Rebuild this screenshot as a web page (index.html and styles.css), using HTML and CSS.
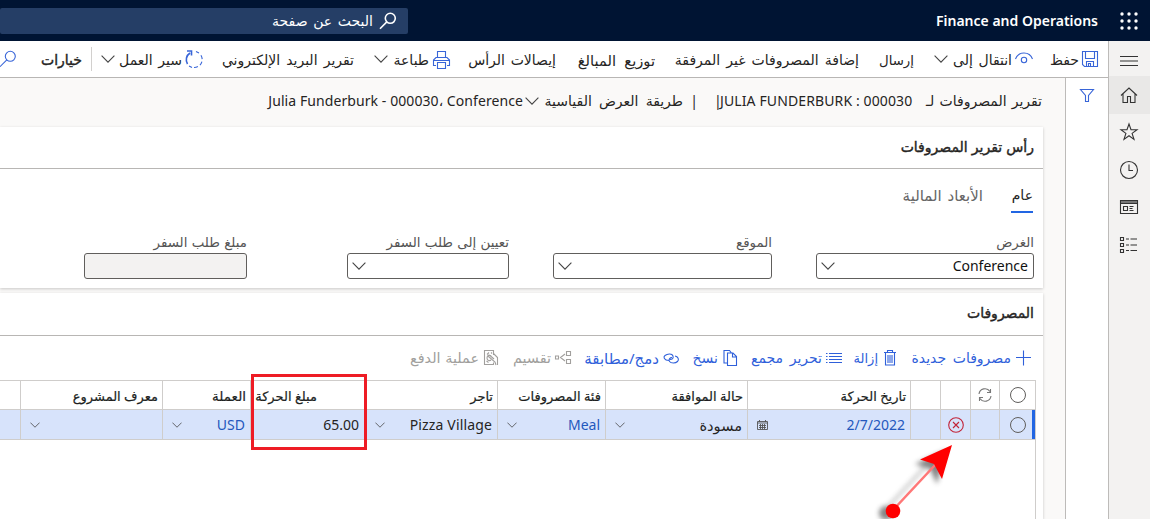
FILE: index.html
```
<!DOCTYPE html>
<html lang="ar" dir="rtl">
<head>
<meta charset="utf-8">
<title>Finance and Operations</title>
<link rel="stylesheet" href="styles.css">
</head>
<body>
<svg class="defs" aria-hidden="true">
  <symbol id="chev" viewBox="0 0 14 8"><path d="M.6.7 7 7.1 13.4.7"/></symbol>
  <symbol id="glass" viewBox="0 0 18 18"><circle cx="11.3" cy="6.3" r="5"/><path d="M7.8 9.9 1 16.7"/></symbol>
</svg>
<header class="top">
  <svg class="waffle" viewBox="0 0 18 18"><g fill="#fff"><circle cx="2" cy="2" r="1.7"/><circle cx="9" cy="2" r="1.7"/><circle cx="16" cy="2" r="1.7"/><circle cx="2" cy="9" r="1.7"/><circle cx="9" cy="9" r="1.7"/><circle cx="16" cy="9" r="1.7"/><circle cx="2" cy="16" r="1.7"/><circle cx="9" cy="16" r="1.7"/><circle cx="16" cy="16" r="1.7"/></g></svg>
  <span class="brand" dir="ltr">Finance and Operations</span>
  <div class="search"><svg class="glass"><use href="#glass"/></svg><span class="t w-search">البحث عن صفحة</span></div>
</header>
<div class="shell">
  <nav class="rail">
    <span class="rail-item"><svg viewBox="0 0 20 20"><path d="M1 5.500h18M1 10h18M1 14.500h18"/></svg></span>
    <span class="rail-item on"><svg viewBox="0 0 20 20"><path d="M2 10.500 10 3l8 7.500M4 9v8.500h4.500v-6h3v6H16V9"/></svg></span>
    <span class="rail-item"><svg viewBox="0 0 20 20"><path d="m10 2 2 5.800h6l-4.900 3.600 1.900 6L10 13.800l-5 3.600 1.900-6L2 7.800h6z"/></svg></span>
    <span class="rail-item"><svg viewBox="0 0 20 20"><circle cx="10" cy="10" r="8.500"/><path d="M10 4.500v6h4"/></svg></span>
    <span class="rail-item"><svg viewBox="0 0 20 20"><path d="M1.500 3.500h17v13h-17zM1.500 6.500h17M4.500 9.500h4v4h-4zM10.500 9.500h4M10.500 11.500h3M10.500 13.500h4"/><path stroke="#777" stroke-width="2" d="M2 5h16"/></svg></span>
    <span class="rail-item"><svg viewBox="0 0 20 20"><path d="M1.500 2.500h3v3h-3zM1.500 8.500h3v3h-3zM1.500 14.500h3v3h-3zM7 4h3M11.500 4H18M7 10h3M11.500 10H18M7 15.500h3M11.500 15.500H18"/></svg></span>
  </nav>
  <div class="app">
    <div class="commands">
      <span class="cmd c-save"><svg class="i16 blue" viewBox="0 0 16 16"><path d="M.5.500h15v15h-13l-2-2zM3.500.500v7h9v-7M4.500 15.500v-5h7v5M6.500 15.500v-3h2v3"/></svg><span class="t w-save">حفظ</span></span>
      <span class="cmd c-goto"><svg class="i18 blue" viewBox="0 0 18 18"><circle cx="9" cy="10" r="2.700"/><path d="M.5 9C2 5 5 3 9 3s7 2 8.500 6"/></svg><span class="t w-goto">انتقال إلى</span><svg class="chev"><use href="#chev"/></svg></span>
      <span class="cmd c-send"><span class="t w-send">إرسال</span></span>
      <span class="cmd c-add"><span class="t w-add">إضافة المصروفات غير المرفقة</span></span>
      <span class="cmd c-dist"><span class="t w-dist">توزيع المبالغ</span></span>
      <span class="cmd c-rcpt"><span class="t w-rcpt">إيصالات الرأس</span></span>
      <span class="cmd c-print"><svg class="i19 blue" viewBox="0 0 19 19"><path d="M5.500 7.500v-6h8v6M4 15.500H1.500V10L4 7.500h11l2.500 2.500v5.500H15M1.500 10.500h16M5.500 12.500h8v6h-8z"/></svg><span class="t w-print">طباعة</span><svg class="chev"><use href="#chev"/></svg></span>
      <span class="cmd c-mail"><span class="t w-mail">تقرير البريد الإلكتروني</span></span>
      <span class="cmd c-flow"><svg class="i19 blue" viewBox="0 0 19 19"><path d="M2.500 14A8 8 0 0 1 5 3M2 1h4.500v4.500" stroke-width="1.600"/><path d="M9 17.500A8 8 0 0 0 15 4" stroke-dasharray="4 2.500"/><path d="M4 16l3 1.400M11 1.500l3 1.500"/></svg><span class="t w-flow">سير العمل</span><svg class="chev"><use href="#chev"/></svg></span>
      <span class="cmd c-opt"><span class="t w-opt">خيارات</span></span>
      <svg class="i18 blue c-find"><use href="#glass"/></svg>
    </div>
    <div class="workspace">
      <aside class="filter"><svg viewBox="0 0 16 16"><path d="M1.500 1.500h13L9.500 7.500v6h-3v-6z"/></svg></aside>
      <main class="page">
        <div class="title">
          <span class="t w-t1">تقرير المصروفات لـ</span>
          <span class="w-t2" dir="ltr"><span class="tick">|</span>JULIA FUNDERBURK : 000030</span>
          <span class="w-bar">|</span>
          <span class="t w-t3">طريقة العرض القياسية</span>
          <svg class="chev"><use href="#chev"/></svg>
          <span class="w-t4" dir="ltr">Julia Funderburk - 000030<bdo dir="ltr">،</bdo> Conference</span>
        </div>
        <section class="card head-card">
          <h2><span class="t w-h1">رأس تقرير المصروفات</span></h2>
          <div class="tabs"><span class="tab active"><span class="t w-tab1">عام</span></span><span class="tab"><span class="t w-tab2">الأبعاد المالية</span></span></div>
          <div class="fields">
            <label class="field"><span class="t">الغرض</span><span class="box"><span dir="ltr" class="w-conf">Conference</span><svg class="chev"><use href="#chev"/></svg></span></label>
            <label class="field"><span class="t">الموقع</span><span class="box"><svg class="chev"><use href="#chev"/></svg></span></label>
            <label class="field"><span class="t">تعيين إلى طلب السفر</span><span class="box"><svg class="chev"><use href="#chev"/></svg></span></label>
            <label class="field apart"><span class="t">مبلغ طلب السفر</span><span class="box off"></span></label>
          </div>
        </section>
        <section class="card lines-card">
          <h2><span class="t w-h2">المصروفات</span></h2>
          <div class="actions">
            <span class="act a-new"><svg viewBox="0 0 16 16"><path d="M8.500 .5v15M1 7.500h15"/></svg><span class="t w-a1">مصروفات جديدة</span></span>
            <span class="act a-del"><svg viewBox="0 0 14 16"><path d="M1 2.500h12M4.500 2.500V.500h5v2M2.500 2.500v12.500h9V2.500M5 5V13M7 5V13M9 5V13"/></svg><span class="t w-a2">إزالة</span></span>
            <span class="act a-edit"><svg viewBox="0 0 16 16"><path d="M3 3.500h13M3 6.500h13M3 9.500h13M3 12.500h13M0 3.500h1.500M0 6.500h1.500M0 9.500h1.500M0 12.500h1.500"/></svg><span class="t w-a3">تحرير مجمع</span></span>
            <span class="act a-copy"><svg viewBox="0 0 14 16"><path d="M4.500 13H1V.500h5.500L8.500 3M4.500 3H10l3.500 3.500v9h-9zM9.500 3v4h4"/></svg><span class="t w-a4">نسخ</span></span>
            <span class="act a-merge"><svg viewBox="0 0 16 16"><path d="M6 10.500C1 10.500 0 7 2 5.500S9 3 10 6s-2 4-4 3M9 7.500c-2 0-4 2-2.500 4s6 2 8 0 .5-5-2.500-5.500"/></svg><span class="t w-a5">دمج/مطابقة</span></span>
            <span class="act a-split dim"><svg viewBox="0 0 16 16"><path d="M11.500 1.500h4v4h-4zM11.500 9.500h4v4h-4zM.5 6h3v3h-3zM10 4 5.500 7.500 10 11"/></svg><span class="t w-a6">تقسيم</span></span>
            <span class="act a-pay dim"><svg viewBox="0 0 14 16"><path d="M4 14.500H.500V.500h9V5M9.500 3.500l4 4v7.500M3 4.500l2-2M7 2.500l1 1M2.500 11l2 1.500M12 15l-1-3-6.500-5.500c-1-1 .5-2 1.500-1l4 3.500M7.500 6.500C6 4.500 3 5 3 8s3 3 4 2M4 14.500h5.500v-2"/></svg><span class="t w-a7">عملية الدفع</span></span>
          </div>
          <div class="grid">
            <div class="row labels">
              <span class="cell mid"><i class="ring"></i></span>
              <span class="cell mid"><svg class="sync" viewBox="0 0 14 14"><path d="M1 6a6 6 0 0 1 11-2.500M12.500 1v3.500H9M13 8A6 6 0 0 1 2 10.500M1.500 13V9.500H5"/></svg></span>
              <span class="cell"></span><span class="cell"></span>
              <span class="cell"><span class="t w-c1">تاريخ الحركة</span></span>
              <span class="cell"><span class="t">حالة الموافقة</span></span>
              <span class="cell"><span class="t">فئة المصروفات</span></span>
              <span class="cell"><span class="t">تاجر</span></span>
              <span class="cell amount"><span class="t">مبلغ الحركة</span></span>
              <span class="cell"><span class="t w-c6">العملة</span></span>
              <span class="cell"><span class="t">معرف المشروع</span></span>
              <span class="cell"></span>
            </div>
            <div class="row picked">
              <span class="cell mid"><i class="ring"></i></span>
              <span class="cell"></span>
              <span class="cell mid"><svg class="error" viewBox="0 0 16 16"><circle cx="8" cy="8" r="7.300"/><path d="m5 5 6 6M11 5l-6 6"/></svg></span>
              <span class="cell"></span>
              <span class="cell val link"><span dir="ltr">2/7/2022</span><svg class="cal" viewBox="0 0 11 11"><path d="M.5 1.500h10v8H.500zM.5 3h10M2.500 0v2M8.500 0v2M2 5.500h7M2 7.500h7M3.500 4v5M5.500 4v5M7.500 4v5"/></svg></span>
              <span class="cell val"><span class="t w-draft">مسودة</span><svg class="chev"><use href="#chev"/></svg></span>
              <span class="cell val link"><span>Meal</span><svg class="chev"><use href="#chev"/></svg></span>
              <span class="cell val merchant"><span>Pizza Village</span><svg class="chev"><use href="#chev"/></svg></span>
              <span class="cell val sum"><span>65.00</span></span>
              <span class="cell val link"><span>USD</span><svg class="chev"><use href="#chev"/></svg></span>
              <span class="cell val project"><svg class="chev"><use href="#chev"/></svg></span>
              <span class="cell"></span>
            </div>
            <div class="empty"></div>
          </div>
        </section>
      </main>
    </div>
  </div>
</div>
<div class="highlight"></div>
<svg class="arrow" viewBox="0 0 90 80">
  <g class="arrow-shadow"><path d="m26 69 39-42" stroke="#777" stroke-width="2"/><circle cx="26" cy="73" r="7" fill="#333"/><path d="M86 10 55 24l15 5 7 15z" fill="#333"/></g>
  <path d="m33 70 43-46" stroke="#f77" stroke-width="2.500"/><circle cx="33" cy="71" r="7.300" fill="red"/><path d="M92 5 60 19.500 74 24l8 15z" fill="red"/>
</svg>
</body>
</html>
```
FILE: styles.css
```
* { box-sizing: border-box; }
html, body { margin: 0; width: 1150px; height: 519px; overflow: hidden; }
body { display: flex; flex-direction: column; background: #fff; color: #252423; font: 14px/20px "Noto Sans", "DejaVu Sans", sans-serif; position: relative; }
.defs { position: absolute; width: 0; height: 0; }
svg { display: block; flex: none; fill: none; stroke: currentColor; stroke-width: 1.1; overflow: visible; }
.t { display: block; flex: none; white-space: nowrap; font-size: 14px; word-spacing: 2px; }
.chev { width: 14px; height: 8px; color: #444; flex: none; }

.top { height: 41px; flex: none; display: flex; background: #001433; color: #fff; align-items: center; padding-right: 12px; }
.waffle { width: 18px; height: 18px; stroke: none; }
.brand { font: 600 14px/20px "Noto Sans", sans-serif; width: 161px; margin-right: 23px; white-space: nowrap; }
.search { width: 408px; height: 26px; margin-right: auto; display: flex; align-items: center; gap: 6px; background: #253e66; border-radius: 2px; padding-right: 11px; }
.search .glass { width: 18px; height: 18px; stroke-width: 1.6; }

.shell { flex: 1; display: flex; min-height: 0; }
.rail { width: 42px; flex: none; background: #f3f2f1; border-left: 1px solid #bdbbb9; }
.rail-item { height: 37.500px; display: flex; align-items: center; justify-content: center; padding-right: 2px; }
.rail-item:first-child { height: 35px; padding-top: 4px; }
.rail-item svg { width: 20px; height: 20px; color: #333; }
.rail-item.on { background: #e9e8e7; }
.app { flex: 1; min-width: 0; display: flex; flex-direction: column; }
.commands { height: 37px; flex: none; border-bottom: 1px solid #b8b6b4; display: flex; align-items: center; padding-right: 10px; }
.cmd { display: flex; align-items: center; flex: none; gap: 3px; height: 24px; }
.cmd .t { padding-top: 2px; }
.cmd .chev { margin-right: 2px; }
.blue { color: #3865d8; }
.i16 { width: 16px; height: 16px; } .i18 { width: 18px; height: 18px; } .i19 { width: 19px; height: 19px; }
.c-save { width: 65px; } .c-goto { width: 119px; } .c-send { width: 55px; } .c-add { width: 204px; }
.c-dist { width: 99px; } .c-rcpt { width: 105px; } .c-print { width: 97px; } .c-mail { width: 150px; }
.c-flow { width: 113px; border-left: 1px solid #d2d0ce; } .c-opt { width: 74px; padding-right: 9px; }
.w-goto { width: 59px; } .w-print { width: 36px; } .w-flow { width: 62px; }
.w-send { font-size: 13.300px; } .w-add { word-spacing: 2.500px; } .w-mail { word-spacing: 2.500px; }
.w-dist { font-size: 14.700px; word-spacing: 4.500px; }
.w-opt, .card h2 .t { -webkit-text-stroke: .4px currentColor; }

.workspace { flex: 1; display: flex; min-height: 0; }
.filter { width: 43px; flex: none; border-left: 1px solid #bdbbb9; display: flex; justify-content: center; padding-top: 10px; color: #3865d8; }
.filter svg { width: 16px; height: 16px; }
.page { flex: 1; min-width: 0; background: #faf9f8; display: flex; flex-direction: column; padding-right: 22px; gap: 5px; }
.title { height: 45px; margin-bottom: -1px; flex: none; display: flex; align-items: center; padding-right: 1px; white-space: nowrap; }
.w-t1 { width: 116px; word-spacing: 1.500px; }
.w-t2 { width: 196px; margin-right: 14px; display: flex; justify-content: flex-start; letter-spacing: .12px; }
.tick { width: 4px; margin-left: -2px; margin-right: 2px; }
.w-bar { width: 4px; margin: 0 18px 0 11px; } .w-t3 { width: 139px; word-spacing: 3.500px; }
.w-t4 { letter-spacing: .08px; }
.title .chev { margin: 0 5px 0 2px; }
.card { background: #fff; box-shadow: 0 1px 3px #0003; }
.card h2 { margin: 0; height: 42px; border-bottom: 1px solid #b8b6b4; display: flex; align-items: center; padding: 0 9px 1px 0; font-weight: 400; }
.w-h1 { word-spacing: .5px; }
.head-card { height: 161px; flex: none; }
.lines-card { flex: 1; display: flex; flex-direction: column; }
.card.lines-card h2 { height: 43px; flex: none; padding-bottom: 2px; }
.tabs { display: flex; gap: 28px; padding: 16px 10px 0 0; height: 45px; color: #666; }
.tab { height: 28px; } .tab.active { border-bottom: 2px solid #2266e3; color: #252423; width: 22px; }
.w-tab2 { font-size: 15px; }
.fields { display: grid; grid-template-columns: 218px 219px 162px 219px; column-gap: 44px; padding: 18px 9px 0 0; }
.field { display: flex; flex-direction: column; gap: 1px; color: #555; }
.field .t { font-size: 13.400px; word-spacing: .8px; }
.field.apart { margin-right: 56px; }
.box { height: 26px; border: 1px solid #605e5c; border-radius: 3px; background: #fff; display: flex; align-items: center; padding: 0 5px 1px 4px; color: #111; }
.box .chev { margin-right: auto; } .off { background: #f3f2f1; }

.actions { display: flex; align-items: center; height: 44px; padding-right: 12px; color: #2f60da; flex: none; }
.act { display: flex; align-items: center; gap: 4px; flex: none; } .act svg { width: 16px; height: 16px; }
.dim { color: #a19f9d; }
.a-new { width: 133px; } .a-del { width: 56px; } .a-edit { width: 104px; } .a-copy { width: 59px; } .a-merge { width: 108px; } .a-split { width: 72px; }
.w-a1, .w-a3 { word-spacing: 3px; } .w-a2 { font-size: 13px; } .w-a5 { font-size: 15px; } .w-a6, .w-a7 { font-size: 14.400px; }
.w-a7 { word-spacing: 1px; }
.grid { flex: 1; display: flex; flex-direction: column; width: 1036px; margin-right: 7px; border: solid #cfcdcb; border-width: 1px 1px 0 0; }
.row { display: grid; grid-template-columns: 36px 29px 30px 30px 163px 142px 108px 132px 115px 88px 142px 20px; height: 29px; flex: none; border-bottom: 1px solid #cfcdcb; }
.cell { border-left: 1px solid #cfcdcb; display: flex; align-items: center; padding-right: 4px; min-width: 0; }
.cell:last-child { border-left: 0; }
.mid { justify-content: center; padding: 0; }
.labels { color: #201f1e; }
.labels .t { font-size: 13px; word-spacing: 0; padding-top: 1px; -webkit-text-stroke: .2px currentColor; }
.labels .w-c6 { font-size: 13.500px; }
.cell.amount { padding-right: 48px; }
.picked { height: 30px; background: #d7e3fb; box-shadow: inset -3px 0 #2266e3; }
.ring { width: 16px; height: 16px; border: 1px solid #605e5c; border-radius: 50%; }
.sync { width: 14px; height: 14px; color: #777; } .error { width: 16px; height: 16px; color: #c22439; }
.val { justify-content: space-between; padding: 1px 5px 0 9px; } .val .chev { width: 14px; height: 8px; transform: scale(.72); margin: 0 -2px; }
.cell.sum { padding-right: 6px; }
.cell.project { justify-content: flex-end; }
.w-draft { font-size: 14.600px; }
.merchant { letter-spacing: .15px; }
.link { color: #2458bd; } .cal { width: 11px; height: 11px; color: #555; stroke-width: .9; } .link .chev { color: #444; }
.empty { flex: 1; }
.highlight { position: absolute; left: 251px; top: 374px; width: 116px; height: 76px; border: 3px solid #ee1c25; }
.arrow { position: absolute; left: 860px; top: 440px; width: 90px; height: 80px; stroke: none; }
.arrow-shadow { filter: blur(2.500px); opacity: .6; }
```
